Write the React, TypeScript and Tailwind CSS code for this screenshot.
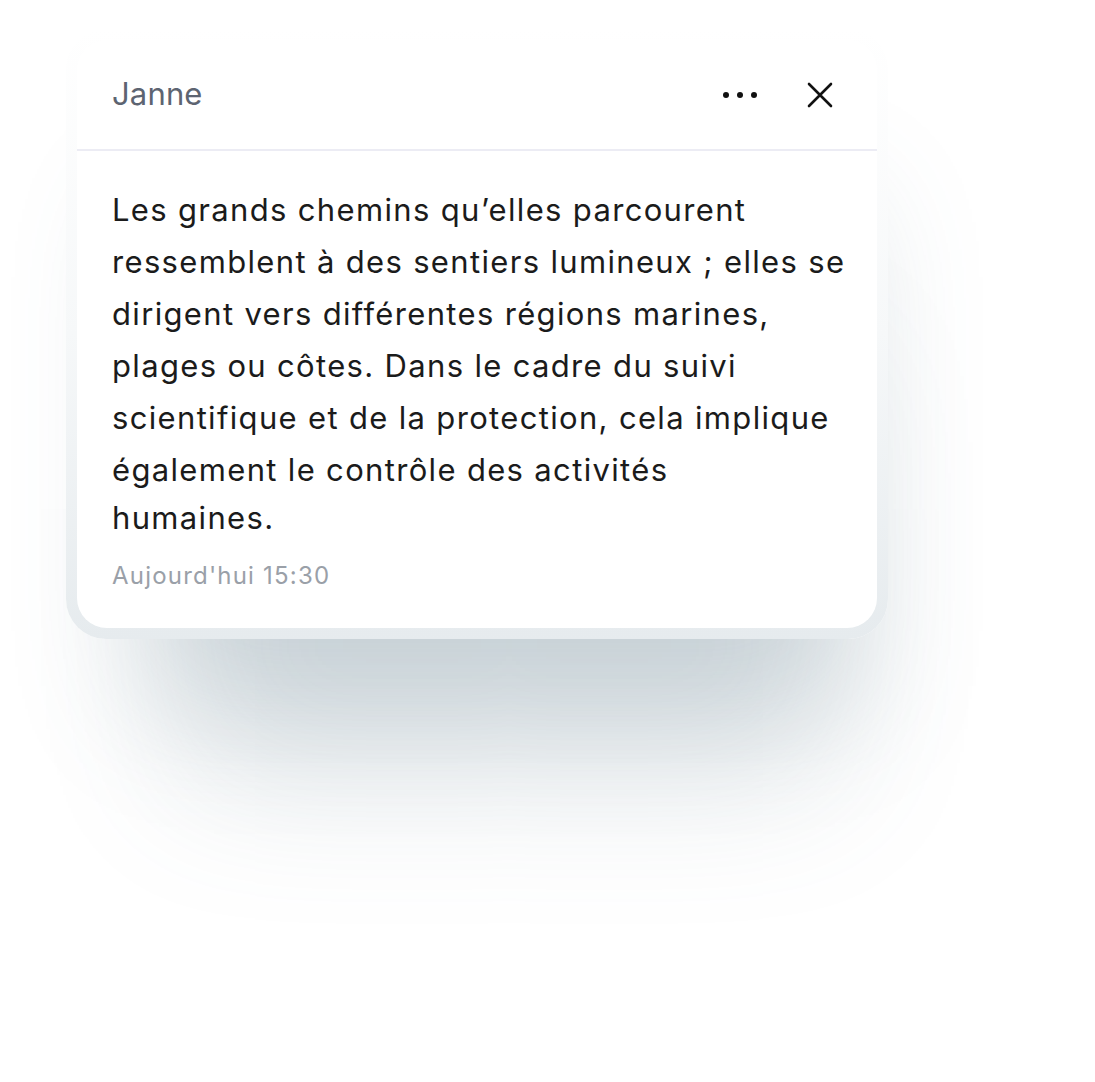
import React from "react";

const lines = [
  "Les grands chemins qu’elles parcourent",
  "ressemblent à des sentiers lumineux ; elles se",
  "dirigent vers différentes régions marines,",
  "plages ou côtes. Dans le cadre du suivi",
  "scientifique et de la protection, cela implique",
  "également le contrôle des activités",
];

export default function App() {
  return (
    <div className="min-h-[1082px] w-full bg-white pl-[66px] pt-[29px] font-['Inter','Liberation_Sans',sans-serif]">
      <div className="w-[822px] rounded-[40px] bg-gradient-to-b from-white via-[#f6f8f9] to-[#e6ebee] p-[11px] shadow-[20px_120px_120px_-50px_rgba(90,118,135,0.2),30px_230px_150px_-90px_rgba(90,118,135,0.18)]">
        <div className="overflow-hidden rounded-[30px] bg-white">
          <div className="flex h-[111px] items-center justify-between border-b-2 border-[#ececf4] pl-[35px] pr-[44px]">
            <span className="text-[31px] tracking-[0.005em] text-[#5d6471]">Janne</span>
            <div className="flex items-center gap-[50px]">
              <div className="flex items-center gap-[8px]">
                <span className="h-[6px] w-[6px] rounded-full bg-[#111]" />
                <span className="h-[6px] w-[6px] rounded-full bg-[#111]" />
                <span className="h-[6px] w-[6px] rounded-full bg-[#111]" />
              </div>
              <svg width="26" height="26" viewBox="0 0 26 26" fill="none">
                <path d="M2 2 L24 24 M24 2 L2 24" stroke="#111" strokeWidth="2.6" strokeLinecap="round" />
              </svg>
            </div>
          </div>
          <div className="px-[35px] pb-[36px] pt-[33px]">
            <p className="text-[31px] leading-[52px] tracking-[0.043em] text-[#1b1b1b]">
              {lines.map((l, i) => (
                <span key={i} className="block whitespace-nowrap">
                  {l}
                </span>
              ))}
              <span className="-mt-[4px] block whitespace-nowrap">humaines.</span>
            </p>
            <div className="mt-[16px] text-[24px] leading-[32px] tracking-[0.05em] text-[#9aa0a8]">
              Aujourd'hui 15:30
            </div>
          </div>
        </div>
      </div>
    </div>
  );
}
